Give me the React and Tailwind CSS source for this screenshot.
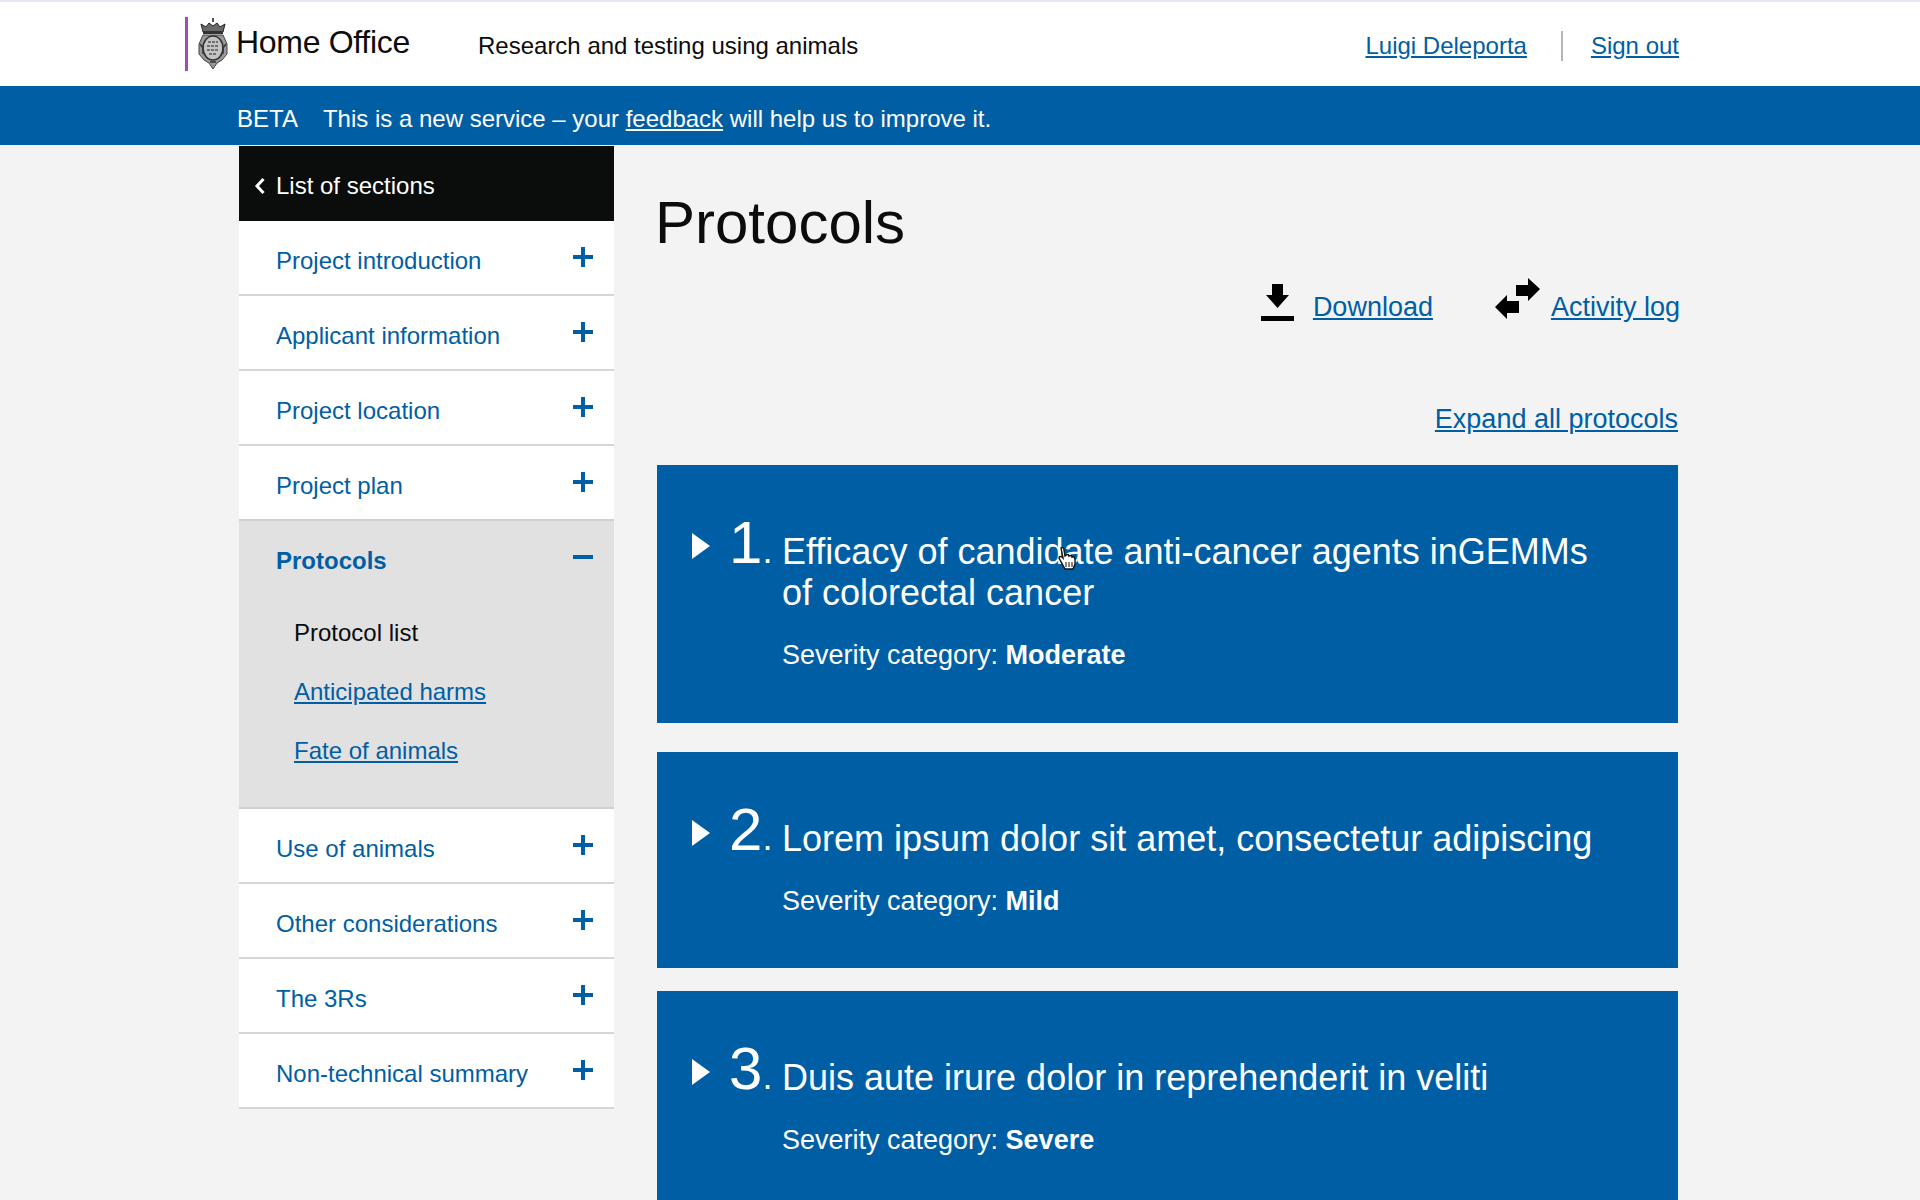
const sectionsTop = ["Project introduction", "Applicant information", "Project location", "Project plan"];
const sectionsBottom = ["Use of animals", "Other considerations", "The 3Rs", "Non-technical summary"];

const protocols = [
  {
    n: "1",
    title: "Efficacy of candidate anti-cancer agents inGEMMs of colorectal cancer",
    severity: "Moderate",
    cls: "h-[258px]",
    cursor: true,
  },
  { n: "2", title: "Lorem ipsum dolor sit amet, consectetur adipiscing", severity: "Mild", cls: "h-[216px] mt-[29px]" },
  { n: "3", title: "Duis aute irure dolor in reprehenderit in veliti", severity: "Severe", cls: "h-[240px] mt-[23px]" },
];

function Crest() {
  return (
    <svg width="30" height="52" viewBox="0 0 30 52" aria-hidden="true">
      {/* crown */}
      <path d="M14 0h2v4h-2z" fill="#555" />
      <path d="M5 14 3 6l5 3 3-4 4 3 4-3 3 4 5-3-2 8z" fill="#6a6a6a" stroke="#222" strokeWidth="1" />
      <rect x="5" y="13" width="20" height="3" fill="#333" />
      {/* garter and shield */}
      <path d="M5 17h20l4 9v10l-5 6-5 3-4 6-4-6-5-3-5-6V26z" fill="#9a9a9a" stroke="#444" strokeWidth="1" />
      <ellipse cx="15" cy="30" rx="10" ry="12" fill="#c4c4c4" stroke="#333" strokeWidth="1.6" />
      <path d="M10 24h10M9 28h12M9 32h12M11 36h8" stroke="#555" strokeWidth="1.5" strokeDasharray="3 1" />
      <path d="M2 26l3 4v6M28 26l-3 4v6" stroke="#333" strokeWidth="1.4" fill="none" />
      <path d="M12 44h6" stroke="#333" strokeWidth="1.5" />
    </svg>
  );
}

function Plus() {
  return (
    <svg width="20" height="20" viewBox="0 0 20 20" aria-hidden="true" className="mb-[8px] shrink-0">
      <path d="M8 0h4v8h8v4h-8v8H8v-8H0V8h8z" fill="#005ea5" />
    </svg>
  );
}

function SideItem({ label }) {
  return (
    <div className="h-[75px] bg-white border-b-2 border-[#d5d5d5] pt-[7px] pl-[37px] pr-[21px] flex items-center justify-between">
      <a className="text-[#005ea5]">{label}</a>
      <Plus />
    </div>
  );
}

function Protocol({ p }) {
  return (
    <div className={`relative bg-[#005ea5] text-white pt-[44px] pl-[35px] pr-[70px] flex ${p.cls}`}>
      <svg width="18" height="26" viewBox="0 0 18 26" aria-hidden="true" className="mt-[24px] shrink-0">
        <path d="M0 0l18 13L0 26z" fill="#fff" />
      </svg>
      <div className="w-[73px] pl-[19px] shrink-0 flex items-start mt-[4px]">
        <span className="text-[60px] leading-[60px]">{p.n}</span>
        <span className="text-[36px] leading-[76px]">.</span>
      </div>
      <div className="pt-[22px] -ml-[1px]">
        <h2 className="text-[36px] leading-[41px]">{p.title}</h2>
        <p className="text-[27px] leading-[30px] mt-[27px]">
          Severity category: <strong className="font-bold">{p.severity}</strong>
        </p>
      </div>
      {p.cursor && (
        <svg width="20" height="24" viewBox="0 0 20 24" aria-hidden="true" className="absolute left-[400px] top-[81px]">
          <path d="M4 2c2-1 3 0 3 2l1 6 1-1c2-1 3 0 3 1 2-1 3 0 3 1 2-1 3 1 3 3v4l-2 5H8L2 12c0-2 2-2 4 0z" fill="#fff" stroke="#111" strokeWidth="1.4" />
          <path d="M9 16v5M12 16v5M15 16v5" stroke="#333" strokeWidth="1.2" />
        </svg>
      )}
    </div>
  );
}

export default function App() {
  return (
    <div className="h-[1200px] overflow-hidden bg-[#f3f3f3] font-['Liberation_Sans',Arial,sans-serif] text-[#0b0c0c]">
      {/* Header */}
      <header className="h-[86px] bg-white border-t-2 border-[#e4e7f1] pl-[185px] pr-[241px] flex items-center">
        <div className="w-[3px] h-[54px] bg-[#9b4fb0] mr-[10px]" />
        <Crest />
        <span className="text-[32px] ml-[8px] -mt-[4px] w-[242px] tracking-[-0.3px]">Home Office</span>
        <span className="text-[24px] mt-[3px]">Research and testing using animals</span>
        <div className="ml-auto mt-[3px] flex items-center text-[24px] text-[#005ea5]">
          <a className="underline">Luigi Deleporta</a>
          <div className="w-[2px] h-[30px] bg-[#b5b5b5] ml-[34px] mr-[28px]" />
          <a className="underline">Sign out</a>
        </div>
      </header>

      {/* Beta banner */}
      <div className="h-[59px] bg-[#005ea5] text-white text-[24px] pt-[6px] pl-[237px] flex items-center">
        <span>BETA</span>
        <span className="ml-[25px]">
          This is a new service – your <a className="underline">feedback</a> will help us to improve it.
        </span>
      </div>

      <div className="flex pl-[239px] pt-[1px]">
        {/* Sidebar */}
        <aside className="w-[375px] shrink-0 text-[24px]">
          <div className="h-[75px] bg-[#0b0c0c] text-white flex items-center pt-[4px] pl-[15px]">
            <svg width="12" height="18" viewBox="0 0 12 18" aria-hidden="true" className="mr-[10px]">
              <path d="M9.5 2 3 9l6.5 7" fill="none" stroke="#fff" strokeWidth="3" />
            </svg>
            List of sections
          </div>
          {sectionsTop.map((s) => (
            <SideItem key={s} label={s} />
          ))}
          <div className="h-[290px] bg-[#e1e1e1] border-y-2 border-[#d0d0d0] pl-[37px] pr-[21px] -mt-[2px]">
            <div className="flex items-center justify-between h-[73px] pt-[7px]">
              <a className="text-[#005ea5] font-bold">Protocols</a>
              <div className="w-[20px] h-[4px] bg-[#005ea5] mb-[8px]" />
            </div>
            <div className="pl-[18px] flex flex-col gap-[31px] mt-[25px]">
              <span className="leading-[28px]">Protocol list</span>
              <a className="underline text-[#005ea5] leading-[28px]">Anticipated harms</a>
              <a className="underline text-[#005ea5] leading-[28px]">Fate of animals</a>
            </div>
          </div>
          {sectionsBottom.map((s) => (
            <SideItem key={s} label={s} />
          ))}
        </aside>

        {/* Main */}
        <main className="w-[1021px] ml-[43px]">
          <h1 className="text-[60px] leading-[70px] mt-[42px] -ml-[2px]">Protocols</h1>
          <div className="flex justify-end items-end gap-[62px] mt-[20px] -mr-[2px] text-[27px] text-[#005ea5]">
            <div className="flex items-end gap-[19px]">
              <svg width="33" height="37" viewBox="0 0 33 37" aria-hidden="true" className="mb-[1px]">
                <path d="M11 0h11v11h6L16.500 24 5 11h6z M0 32h33v5H0z" fill="#000" />
              </svg>
              <a className="underline leading-[30px]">Download</a>
            </div>
            <div className="flex items-end gap-[11px]">
              <svg width="45" height="41" viewBox="0 0 45 41" aria-hidden="true" className="mb-[3px]">
                <path d="M21 7h12V0l12 11-12 12v-5H21z M24 23H12v-6L0 29l12 12v-6h12z" fill="#000" />
              </svg>
              <a className="underline leading-[30px]">Activity log</a>
            </div>
          </div>
          <div className="flex justify-end mt-[82px]">
            <a className="underline text-[27px] leading-[30px] text-[#005ea5]">Expand all protocols</a>
          </div>
          <div className="flex flex-col mt-[31px]">
            {protocols.map((p) => (
              <Protocol key={p.n} p={p} />
            ))}
          </div>
        </main>
      </div>
    </div>
  );
}
